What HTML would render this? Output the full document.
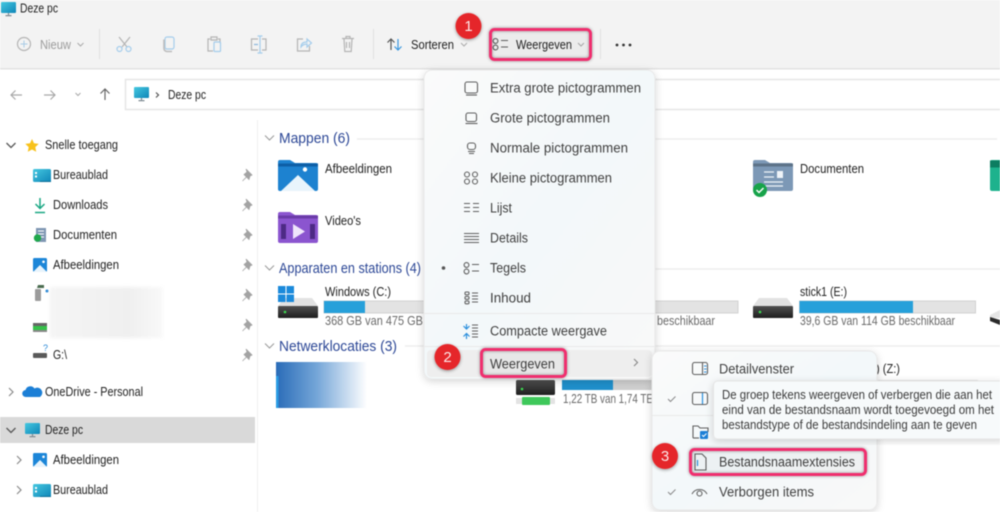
<!DOCTYPE html>
<html lang="nl"><head><meta charset="utf-8"><title>Deze pc</title>
<style>
html,body{margin:0;padding:0;width:1000px;height:512px;overflow:hidden;background:#fff}
svg{display:block;filter:blur(.45px)}
text{font-family:"Liberation Sans",sans-serif;font-size:12.5px;fill:#222}
.g{fill:#9c9c9c}.s{fill:#6a6a6a}
.h{font-size:14.5px;fill:#2c4796}
.m{fill:#404040;font-size:13.5px}
.t{fill:#3c3c3c;font-size:12.5px}
.i{fill:none;stroke:#5f5f5f;stroke-width:1.1}
.d{fill:none;stroke:#b4b4b4;stroke-width:1.2}
.b{fill:none;stroke:#a5cdec;stroke-width:1.2}
.p{fill:rgba(0,0,0,.02);stroke:#f02f6e;stroke-width:3}
.n{font-size:15px;fill:#fde8e8;text-anchor:middle}
</style></head><body>
<svg width="1000" height="512" viewBox="0 0 1000 512" xmlns="http://www.w3.org/2000/svg">
<defs>
<linearGradient id="mon" x1="0" y1="0" x2="1" y2="1"><stop offset="0" stop-color="#45c8e0"/><stop offset="1" stop-color="#0f86b8"/></linearGradient>
<linearGradient id="menu" x1="0" y1="0" x2="1" y2="1"><stop offset="0" stop-color="#fbfbfb"/><stop offset=".5" stop-color="#f3f8fa"/><stop offset="1" stop-color="#f9f9f9"/></linearGradient>
<linearGradient id="dr" x1="0" y1="0" x2="0" y2="1"><stop offset="0" stop-color="#505050"/><stop offset="1" stop-color="#1e1e1e"/></linearGradient>
<linearGradient id="net" x1="0" y1="0" x2="1" y2="0"><stop offset="0" stop-color="#2a6cb8"/><stop offset=".45" stop-color="#75a6d8"/><stop offset="1" stop-color="#fff"/></linearGradient>
<linearGradient id="blur" x1="0" y1="0" x2="1" y2="0"><stop offset="0" stop-color="#f5f5f5"/><stop offset=".7" stop-color="#efefef"/><stop offset="1" stop-color="#f9f9f9"/></linearGradient>
<filter id="sh" x="-10%" y="-10%" width="120%" height="120%"><feDropShadow dx="0" dy="2" stdDeviation="4" flood-color="#000" flood-opacity=".16"/></filter>
<filter id="bs" x="-40%" y="-40%" width="180%" height="180%"><feDropShadow dx="0" dy="1" stdDeviation="1.500" flood-color="#000" flood-opacity=".4"/></filter>
<filter id="gl" x="-15%" y="-40%" width="130%" height="180%"><feDropShadow dx="0" dy="0" stdDeviation="1.500" flood-color="#000" flood-opacity=".4"/></filter>
<g id="monitor"><rect x="0" y="0" width="15" height="11" rx="1" fill="url(#mon)"/><path d="M7.500 11v2.400M4.500 13.600h6" stroke="#7f8c94" stroke-width="1.200"/></g>
<g id="drive"><path d="M6 0h28l6 8H0z" fill="#e2e2e2"/><rect x="0" y="8" width="40" height="12" rx="1" fill="url(#dr)"/><circle cx="7" cy="14" r="1.300" fill="#3ddc50"/></g>
<path id="pin" d="M4 0l6 6-2 1-1 3.500-2.500-2.500-4 4 4-4-2.500-2.500L5 3z" fill="#a3a3a3" stroke="#a3a3a3" stroke-width=".8"/>
<g id="chev"><path d="M0 0l4 4-4 4" fill="none" stroke="#8a8a8a" stroke-width="1.200"/></g>
<g id="chevd"><path d="M0 0l4.500 4.500 4.500-4.500" fill="none" stroke="#555" stroke-width="1.300"/></g>
<g id="pic"><rect width="14" height="14" rx="1.500" fill="#1c86d8"/><path d="M0 14l7-7 7 7z" fill="#e8f4fc"/><circle cx="10.500" cy="3.800" r="1.300" fill="#fff"/></g>
<g id="desk"><rect width="18" height="13" rx="1.500" fill="url(#mon)"/><rect x="2" y="3" width="2" height="2" fill="#fff"/><rect x="2" y="6.500" width="2" height="2" fill="#fff"/><path d="M7 13h11v-1H7z" fill="#0d6f98"/></g>
<g id="tile"><circle cx="2.500" cy="3" r="2.400" class="i"/><circle cx="2.500" cy="9.500" r="2.400" class="i"/><path d="M8 2.500h7M8 9h7" class="i"/></g>
</defs>

<!-- window chrome -->
<rect width="1000" height="68" fill="#f3f3f3"/>
<rect y="68" width="1000" height="1.500" fill="#e2e2e2"/>
<use href="#monitor" x="1" y="2"/>
<text x="20" y="12.500" textLength="38" lengthAdjust="spacingAndGlyphs">Deze pc</text>

<!-- toolbar -->
<circle cx="24" cy="44" r="6.500" class="d"/><path d="M24 40.500v7M20.500 44h7" stroke="#a9cbe6" stroke-width="1"/>
<text x="40" y="49" class="g" textLength="31" lengthAdjust="spacingAndGlyphs">Nieuw</text>
<path d="M77.500 43l3 3 3-3" fill="none" stroke="#aaa" stroke-width="1"/>
<path d="M99.500 29v30M373.500 29v30M600.500 29v30" stroke="#e0e0e0"/>
<path d="M119 37l8 10M130 37l-8 10" class="d"/><circle cx="119.500" cy="49" r="2.500" class="b"/><circle cx="128.500" cy="49" r="2.500" class="b"/>
<rect x="165" y="37" width="9" height="12" rx="2" class="b"/><path d="M164 39.500v9a3 3 0 0 0 3 3h5" stroke="#bdbdbd" stroke-width="1.600" fill="none"/>
<path d="M210 39h-2v12h5M218 39h2v4M211 37h6v3h-6z" class="d"/><rect x="214" y="42" width="6.500" height="9.500" rx="1" class="b"/>
<path d="M258 39h-6.500v11h6.500M262 39h4v11h-4" class="d"/><path d="M260 36v17M257.500 36h5M257.500 53h5" class="b"/><path d="M254 44.500h4" stroke="#8fb9dc" stroke-width="1.300"/>
<path d="M303 39h-5.500v12h12v-5" class="d"/><path d="M301 47c0-4 3-5 6-5v-3l4.500 4-4.500 4v-3c-3 0-4.500 1-6 3z" class="b"/>
<path d="M342 38.500h12M344 39l.8 12.500h6.400l.8-12.500M346 38v-1.500h4V38M346.500 42v6M349.500 42v6" class="d"/>
<path d="M391 50V39M387.500 42.500l3.500-3.500 3.500 3.500" fill="none" stroke="#555" stroke-width="1.200"/>
<path d="M398 39v11M394.500 46.500l3.500 3.500 3.500-3.500" fill="none" stroke="#3a97de" stroke-width="1.200"/>
<text x="411" y="49" fill="#404040" textLength="43" lengthAdjust="spacingAndGlyphs">Sorteren</text>
<path d="M461 43l3 3 3-3" fill="none" stroke="#aaa" stroke-width="1"/>
<g transform="translate(493 38)"><use href="#tile"/></g>
<text x="516" y="49" textLength="56" lengthAdjust="spacingAndGlyphs">Weergeven</text>
<path d="M578 43l3 3 3-3" fill="none" stroke="#aaa" stroke-width="1"/>
<circle cx="617" cy="45" r="1.400" fill="#333"/><circle cx="623.500" cy="45" r="1.400" fill="#333"/><circle cx="630" cy="45" r="1.400" fill="#333"/>

<!-- nav -->
<path d="M22 95H11M15.500 90.500L11 95l4.500 4.500M44 95h11M50.500 90.500L55 95l-4.500 4.500" fill="none" stroke="#a8a8a8" stroke-width="1.200"/>
<path d="M75.500 93l2.500 2.500 2.500-2.500" fill="none" stroke="#a8a8a8" stroke-width="1"/>
<path d="M105 100V89M100.500 93.500L105 89l4.500 4.500" fill="none" stroke="#666" stroke-width="1.200"/>
<rect x="125.500" y="79.500" width="900" height="30" fill="#fff" stroke="#e6e6e6" stroke-width="1.500"/>
<use href="#monitor" x="134" y="87"/>
<path d="M156 92.500l2.500 2.500-2.500 2.500" fill="none" stroke="#555" stroke-width="1.200"/>
<text x="168" y="99" textLength="38" lengthAdjust="spacingAndGlyphs">Deze pc</text>

<!-- sidebar -->
<path d="M257.500 120V512" stroke="#f0f0f0"/>
<rect x="0" y="417" width="255" height="26" fill="#d9d9d9"/>
<use href="#chevd" x="6.500" y="143"/>
<path d="M32 139l2 4.300 4.700.6-3.400 3.200.9 4.700-4.200-2.300-4.200 2.300.9-4.700-3.400-3.200 4.700-.6z" fill="#f8c21c"/>
<text x="45" y="149" textLength="73" lengthAdjust="spacingAndGlyphs">Snelle toegang</text>
<use href="#desk" x="33" y="169"/><text x="53" y="179" textLength="55" lengthAdjust="spacingAndGlyphs">Bureaublad</text>
<path d="M40 198v10M35.500 204l4.500 4.500 4.500-4.500" fill="none" stroke="#19a783" stroke-width="1.500"/><path d="M35 212.500h10" stroke="#19a783" stroke-width="1.500"/>
<text x="53" y="209" textLength="55" lengthAdjust="spacingAndGlyphs">Downloads</text>
<rect x="36" y="228" width="10" height="14" fill="#7f97b3"/><path d="M38 231h6M38 234h6M40 237h4" stroke="#fff"/><circle cx="37.500" cy="238" r="3.700" fill="#1fa84c"/>
<text x="53" y="239" textLength="64" lengthAdjust="spacingAndGlyphs">Documenten</text>
<use href="#pic" x="33" y="258"/><text x="53" y="269" textLength="66" lengthAdjust="spacingAndGlyphs">Afbeeldingen</text>
<rect x="35" y="289" width="6" height="12" rx="1" fill="#9b9b9b"/><path d="M37 288h7v-3h-6z" fill="#4a6c50"/><circle cx="47" cy="291" r="1.500" fill="#2d8ad6"/>
<rect x="50" y="287" width="113" height="51" fill="url(#blur)" style="filter:blur(1.500px)"/>
<rect x="33" y="323" width="14" height="3" fill="#666"/><rect x="33" y="326" width="14" height="4" fill="#36c24a"/><rect x="33" y="330" width="14" height="2" fill="#888"/>
<rect x="33" y="353" width="14" height="5" rx="1" fill="#5a5a5a"/><text x="43" y="351" style="font-size:9px;fill:#2d8ad6">?</text>
<text x="53" y="359" textLength="14" lengthAdjust="spacingAndGlyphs">G:\</text>
<use href="#pin" x="242" y="169"/><use href="#pin" x="242" y="199"/><use href="#pin" x="242" y="229"/><use href="#pin" x="242" y="259"/><use href="#pin" x="242" y="289"/><use href="#pin" x="242" y="319"/><use href="#pin" x="242" y="349"/>
<use href="#chev" x="9" y="388"/>
<path d="M26 397a3.500 3.500 0 0 1-.5-7 5 5 0 0 1 9-1.500 4 4 0 0 1 5.500 8.500z" fill="#1c7fd6"/>
<text x="45" y="396" textLength="98" lengthAdjust="spacingAndGlyphs">OneDrive - Personal</text>
<use href="#chevd" x="6.500" y="428"/><use href="#monitor" x="25" y="423"/>
<text x="45" y="434" textLength="38" lengthAdjust="spacingAndGlyphs">Deze pc</text>
<use href="#chev" x="17" y="456"/><use href="#pic" x="33" y="453"/><text x="53" y="464" textLength="66" lengthAdjust="spacingAndGlyphs">Afbeeldingen</text>
<use href="#chev" x="17" y="486"/><use href="#desk" x="33" y="484"/><text x="53" y="494" textLength="55" lengthAdjust="spacingAndGlyphs">Bureaublad</text>

<!-- content: sections -->
<path d="M265 135.500l4.500 4.500 4.500-4.500M265 265.500l4.500 4.500 4.500-4.500M265 343.500l4.500 4.500 4.500-4.500" fill="none" stroke="#999" stroke-width="1"/>
<text x="279" y="143" class="h" textLength="71" lengthAdjust="spacingAndGlyphs">Mappen (6)</text>
<text x="279" y="273" class="h" textLength="142" lengthAdjust="spacingAndGlyphs">Apparaten en stations (4)</text>
<text x="279" y="351" class="h" textLength="118" lengthAdjust="spacingAndGlyphs">Netwerklocaties (3)</text>
<path d="M357 139h640M655 269h345M405 346h595" stroke="#eeeeee" stroke-width="1.500"/>

<!-- folders -->
<g transform="translate(278 160)"><path d="M0 2a2 2 0 0 1 2-2h10l5 3h21a2 2 0 0 1 2 2v24a2 2 0 0 1-2 2H2a2 2 0 0 1-2-2z" fill="#1d82d0"/><path d="M0 5h40" stroke="#0d5fa6" stroke-width="3"/><path d="M3 31l17-16 17 16z" fill="#e8f4fc"/><circle cx="27" cy="9.500" r="2.200" fill="#fff"/></g>
<text x="325" y="173" textLength="67" lengthAdjust="spacingAndGlyphs">Afbeeldingen</text>
<g transform="translate(278 212)"><path d="M0 2a2 2 0 0 1 2-2h10l5 3h21a2 2 0 0 1 2 2v24a2 2 0 0 1-2 2H2a2 2 0 0 1-2-2z" fill="#8b55cf"/><path d="M0 5h40" stroke="#6b3ba8" stroke-width="3"/><path d="M15 12l12 7.500L15 27z" fill="#efe6fb"/><path d="M3 12h5v15H3zM32 12h5v15h-5z" fill="#4d2a85"/></g>
<text x="325" y="225" textLength="36" lengthAdjust="spacingAndGlyphs">Video's</text>
<g transform="translate(753 160)"><path d="M0 2a2 2 0 0 1 2-2h10l5 3h21a2 2 0 0 1 2 2v24a2 2 0 0 1-2 2H2a2 2 0 0 1-2-2z" fill="#7c98b6"/><path d="M0 5h40" stroke="#5c7288" stroke-width="3"/><path d="M11 12h10M11 17h10M11 22h19M11 26h19" stroke="#eef3f8" stroke-width="1.300"/><rect x="24" y="11" width="6" height="7" fill="#eef3f8"/></g>
<circle cx="760" cy="190" r="7" fill="#17a34a"/><path d="M756.500 190l2.500 2.500 4.500-4.500" fill="none" stroke="#fff" stroke-width="1.500"/>
<text x="800" y="173" textLength="64" lengthAdjust="spacingAndGlyphs">Documenten</text>
<path d="M990 162a2 2 0 0 1 2-2h8v31h-8a2 2 0 0 1-2-2z" fill="#1db28d"/><path d="M990 164h10" stroke="#0c7d61" stroke-width="7"/>

<!-- drives -->
<use href="#drive" x="278" y="298"/>
<g fill="#1b8adb"><rect x="278" y="286" width="7.500" height="7.500"/><rect x="286.500" y="286" width="7.500" height="7.500"/><rect x="278" y="294.500" width="7.500" height="7.500"/><rect x="286.500" y="294.500" width="7.500" height="7.500"/></g>
<text x="325" y="296" textLength="66" lengthAdjust="spacingAndGlyphs">Windows (C:)</text>
<rect x="324" y="301" width="414" height="12" fill="#e3e3e3" stroke="#d2d2d2"/><rect x="324" y="301" width="41" height="12" fill="#26a0da"/>
<text x="325" y="325" class="s" textLength="160" lengthAdjust="spacingAndGlyphs">368 GB van 475 GB beschikbaar</text>
<text x="657" y="325" class="s" textLength="58" lengthAdjust="spacingAndGlyphs">beschikbaar</text>
<use href="#drive" x="753" y="298"/>
<text x="800" y="296" textLength="47" lengthAdjust="spacingAndGlyphs">stick1 (E:)</text>
<rect x="799.500" y="301" width="176" height="12" fill="#e3e3e3" stroke="#d2d2d2"/><rect x="799.500" y="301" width="113.500" height="12" fill="#26a0da"/>
<text x="800" y="325" class="s" textLength="155" lengthAdjust="spacingAndGlyphs">39,6 GB van 114 GB beschikbaar</text>
<path d="M990 315l10-5v8l-10 0z" fill="#e5e5e5"/><path d="M990 317l10 3v5l-10-4z" fill="#2a2a2a"/>
<rect x="276" y="362" width="91" height="46" fill="url(#net)"/><rect x="276" y="376" width="2.500" height="32" fill="#2a9ce4"/>
<rect x="516" y="380" width="39" height="15" rx="1.500" fill="url(#dr)"/><circle cx="522" cy="389" r="1.300" fill="#3ddc50"/>
<rect x="516" y="398" width="39" height="6" fill="#e3e3e3"/><rect x="522" y="397" width="28" height="8" rx="1" fill="#3ec85a"/>
<rect x="562" y="380" width="92" height="10" fill="#cfcfcf"/><rect x="562" y="380" width="51" height="10" fill="#1f8fcb"/>
<text x="563" y="403" class="s" textLength="90" lengthAdjust="spacingAndGlyphs">1,22 TB van 1,74 TE</text>
<text x="876" y="373" textLength="24" lengthAdjust="spacingAndGlyphs">) (Z:)</text>
<rect x="878" y="380" width="100" height="2" fill="#dcdcdc"/>

<!-- menu 1 -->
<rect x="424" y="70" width="231" height="309" rx="8" fill="url(#menu)" stroke="#e8e8e8" filter="url(#sh)"/>
<path d="M424 313.500h231M424 346.500h231" stroke="#e9e9e9"/>
<rect x="427" y="350" width="225" height="27" rx="4" fill="#eeeeee"/>
<text x="490" y="92.500" class="m" textLength="151" lengthAdjust="spacingAndGlyphs">Extra grote pictogrammen</text>
<text x="490" y="122.500" class="m" textLength="120" lengthAdjust="spacingAndGlyphs">Grote pictogrammen</text>
<text x="490" y="152.500" class="m" textLength="138" lengthAdjust="spacingAndGlyphs">Normale pictogrammen</text>
<text x="490" y="182.500" class="m" textLength="122" lengthAdjust="spacingAndGlyphs">Kleine pictogrammen</text>
<text x="490" y="212.500" class="m" textLength="22" lengthAdjust="spacingAndGlyphs">Lijst</text>
<text x="490" y="242.500" class="m" textLength="38" lengthAdjust="spacingAndGlyphs">Details</text>
<text x="490" y="272.500" class="m" textLength="36" lengthAdjust="spacingAndGlyphs">Tegels</text>
<text x="490" y="302.500" class="m" textLength="41" lengthAdjust="spacingAndGlyphs">Inhoud</text>
<text x="490" y="335.500" class="m" textLength="117" lengthAdjust="spacingAndGlyphs">Compacte weergave</text>
<text x="490" y="368.500" class="m" textLength="65" lengthAdjust="spacingAndGlyphs">Weergeven</text>
<rect x="465" y="82" width="12.500" height="11" rx="2" class="i"/><path d="M466 95h11" class="i"/>
<rect x="466" y="113" width="10.500" height="8.500" rx="2" class="i"/><path d="M465.500 123.500h12" class="i"/>
<rect x="467.500" y="143" width="8" height="6.500" rx="2.500" class="i"/><path d="M468 151.500h7M469 153.500h5" class="i"/>
<g class="i"><circle cx="467" cy="174.500" r="2.500"/><circle cx="475" cy="174.500" r="2.500"/><circle cx="467" cy="181.500" r="2.500"/><circle cx="475" cy="181.500" r="2.500"/></g>
<path d="M464 203.500h6M464 207.500h6M464 211.500h6M473 203.500h6M473 207.500h6M473 211.500h6" class="i"/>
<path d="M464 233.500h15M464 236.500h15M464 239.500h15M464 242.500h15" class="i"/>
<circle cx="443.500" cy="268" r="1.800" fill="#555"/>
<g transform="translate(464 262)"><use href="#tile"/></g>
<g class="i"><rect x="465" y="292" width="4" height="2.800" rx="1"/><rect x="465" y="296.500" width="4" height="2.800" rx="1"/><rect x="465" y="301" width="4" height="2.800" rx="1"/><path d="M472 293h6M472 296h6M472 299h6M472 302h6"/></g>
<path d="M466.500 324v4.500M463.500 326l3 3 3-3M466.500 339v-5M463.500 336.500l3-3 3 3" fill="none" stroke="#2b8fdc" stroke-width="1.200"/><path d="M472 325h6M472 328h6M472 331h6M472 334h6M472 337h6" class="i"/>
<path d="M634 359l3.500 3.500-3.500 3.500" fill="none" stroke="#8c8c8c" stroke-width="1.200"/>

<!-- submenu -->
<rect x="652" y="351" width="225" height="159" rx="8" fill="url(#menu)" stroke="#e8e8e8" filter="url(#sh)"/>
<path d="M652 415.500h225" stroke="#e9e9e9"/>
<rect x="692.500" y="362.500" width="15" height="12" rx="2" class="i"/><path d="M702.500 363v11" class="i"/><path d="M704 366h2.500M704 369h2.500M704 372h2.500" stroke="#2b8fdc"/>
<text x="719" y="373.500" class="m" textLength="75" lengthAdjust="spacingAndGlyphs">Detailvenster</text>
<path d="M668 399l2.500 2.500 5-5M668 492l2.500 2.500 5-5" fill="none" stroke="#8a8a8a" stroke-width="1"/>
<rect x="692.500" y="392.500" width="15" height="12" rx="2" class="i"/><path d="M702.500 393v11" stroke="#2b8fdc" stroke-width="1.200"/>
<path d="M693 438v-12h5l2 2h8v4" class="i"/><path d="M693 438h6" class="i"/><rect x="700" y="431" width="8" height="8" rx="1" fill="#1c7fd6"/><path d="M702 435l1.500 1.500 3-3" stroke="#fff" fill="none"/>
<path d="M695 454h7l4 4v12h-11z" class="i"/><path d="M697.500 460v6" stroke="#2b8fdc" stroke-width="1.200"/>
<text x="719" y="466.500" class="m" textLength="136" lengthAdjust="spacingAndGlyphs">Bestandsnaamextensies</text>
<path d="M692 494c3-6 12-6 15 0" class="i"/><circle cx="699.500" cy="493.500" r="2.500" class="i"/>
<text x="719" y="496.500" class="m" textLength="95" lengthAdjust="spacingAndGlyphs">Verborgen items</text>

<!-- tooltip -->
<rect x="713.500" y="381" width="294" height="58" rx="4" fill="#f7fafb" stroke="#e4e4e4" filter="url(#sh)"/>
<text x="722" y="399" class="t" textLength="270" lengthAdjust="spacingAndGlyphs">De groep tekens weergeven of verbergen die aan het</text>
<text x="722" y="414" class="t" textLength="272" lengthAdjust="spacingAndGlyphs">eind van de bestandsnaam wordt toegevoegd om het</text>
<text x="722" y="429" class="t" textLength="255" lengthAdjust="spacingAndGlyphs">bestandstype of de bestandsindeling aan te geven</text>

<!-- highlights -->
<g filter="url(#gl)">
<rect x="490.500" y="29.500" width="100" height="30" rx="4" class="p"/>
<rect x="481.500" y="349.500" width="84" height="27" rx="4" class="p"/>
<rect x="690.500" y="449.500" width="175" height="25" rx="4" class="p"/>
</g>
<g filter="url(#bs)"><circle cx="468.500" cy="26" r="13" fill="#e5262b"/><circle cx="447.500" cy="357" r="13" fill="#e5262b"/><circle cx="665" cy="456" r="13" fill="#e5262b"/></g>
<text x="468.500" y="31" class="n">1</text><text x="447.500" y="362" class="n">2</text><text x="665" y="461" class="n">3</text>
</svg>
</body></html>
